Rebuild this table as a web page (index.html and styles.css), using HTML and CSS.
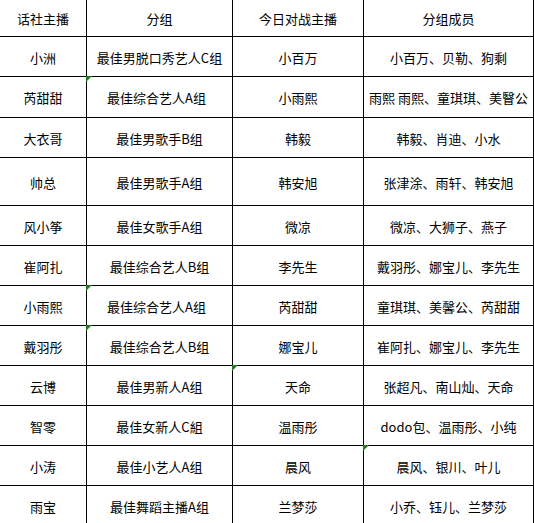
FILE: index.html
```html
<!DOCTYPE html>
<html lang="zh-CN">
<head>
<meta charset="utf-8">
<title>话社主播分组</title>
<link rel="stylesheet" href="styles.css">
</head>
<body>
<div class="sheet">
  <div class="cell head">话社主播</div>
  <div class="cell head">分组</div>
  <div class="cell head">今日对战主播</div>
  <div class="cell head">分组成员</div>

  <div class="cell">小洲</div>
  <div class="cell">最佳男脱口秀艺人C组</div>
  <div class="cell">小百万</div>
  <div class="cell">小百万、贝勒、狗剩</div>

  <div class="cell">芮甜甜</div>
  <div class="cell flag shift">最佳综合艺人A组</div>
  <div class="cell">小雨熙</div>
  <div class="cell">雨熙 雨熙、童琪琪、美瞖公</div>

  <div class="cell">大衣哥</div>
  <div class="cell">最佳男歌手B组</div>
  <div class="cell">韩毅</div>
  <div class="cell">韩毅、肖迪、小水</div>

  <div class="cell">帅总</div>
  <div class="cell">最佳男歌手A组</div>
  <div class="cell">韩安旭</div>
  <div class="cell">张津涂、雨轩、韩安旭</div>

  <div class="cell">风小筝</div>
  <div class="cell">最佳女歌手A组</div>
  <div class="cell">微凉</div>
  <div class="cell">微凉、大狮子、燕子</div>

  <div class="cell">崔阿扎</div>
  <div class="cell">最佳综合艺人B组</div>
  <div class="cell">李先生</div>
  <div class="cell">戴羽彤、娜宝儿、李先生</div>

  <div class="cell">小雨熙</div>
  <div class="cell flag shift">最佳综合艺人A组</div>
  <div class="cell">芮甜甜</div>
  <div class="cell">童琪琪、美馨公、芮甜甜</div>

  <div class="cell">戴羽彤</div>
  <div class="cell flag">最佳综合艺人B组</div>
  <div class="cell">娜宝儿</div>
  <div class="cell">崔阿扎、娜宝儿、李先生</div>

  <div class="cell">云博</div>
  <div class="cell">最佳男新人A组</div>
  <div class="cell flag">天命</div>
  <div class="cell">张超凡、南山灿、天命</div>

  <div class="cell">智零</div>
  <div class="cell">最佳女新人C組</div>
  <div class="cell">温雨彤</div>
  <div class="cell">dodo包、温雨彤、小纯</div>

  <div class="cell">小涛</div>
  <div class="cell">最佳小艺人A组</div>
  <div class="cell">晨风</div>
  <div class="cell flag">晨风、银川、叶儿</div>

  <div class="cell">雨宝</div>
  <div class="cell">最佳舞蹈主播A组</div>
  <div class="cell">兰梦莎</div>
  <div class="cell">小乔、钰儿、兰梦莎</div>
</div>
</body>
</html>
```

FILE: styles.css
```css
html, body {
  margin: 0;
  padding: 0;
  background: #ffffff;
}

body {
  font-family: "Noto Sans CJK SC", "Liberation Sans", sans-serif;
  font-size: 13px;
  color: #000000;
}

.sheet {
  display: grid;
  grid-template-columns: 87px 146px 131px 170px;
  grid-template-rows: 37px 40px 41px 40px 48px 40px 40px 40px 40px 40px 40px 40px 40px;
  width: 534px;
}

.cell {
  position: relative;
  display: flex;
  align-items: center;
  justify-content: center;
  box-sizing: border-box;
  border-right: 1px solid #000000;
  border-bottom: 1px solid #000000;
  white-space: nowrap;
  line-height: 1;
  padding-top: 1px;
}

.head {
  padding-top: 0;
}

.shift {
  padding-right: 6px;
}

.flag::before {
  content: "";
  position: absolute;
  left: -1px;
  top: -1px;
  width: 0;
  height: 0;
  border-top: 6px solid #237a23;
  border-right: 6px solid transparent;
}
```
